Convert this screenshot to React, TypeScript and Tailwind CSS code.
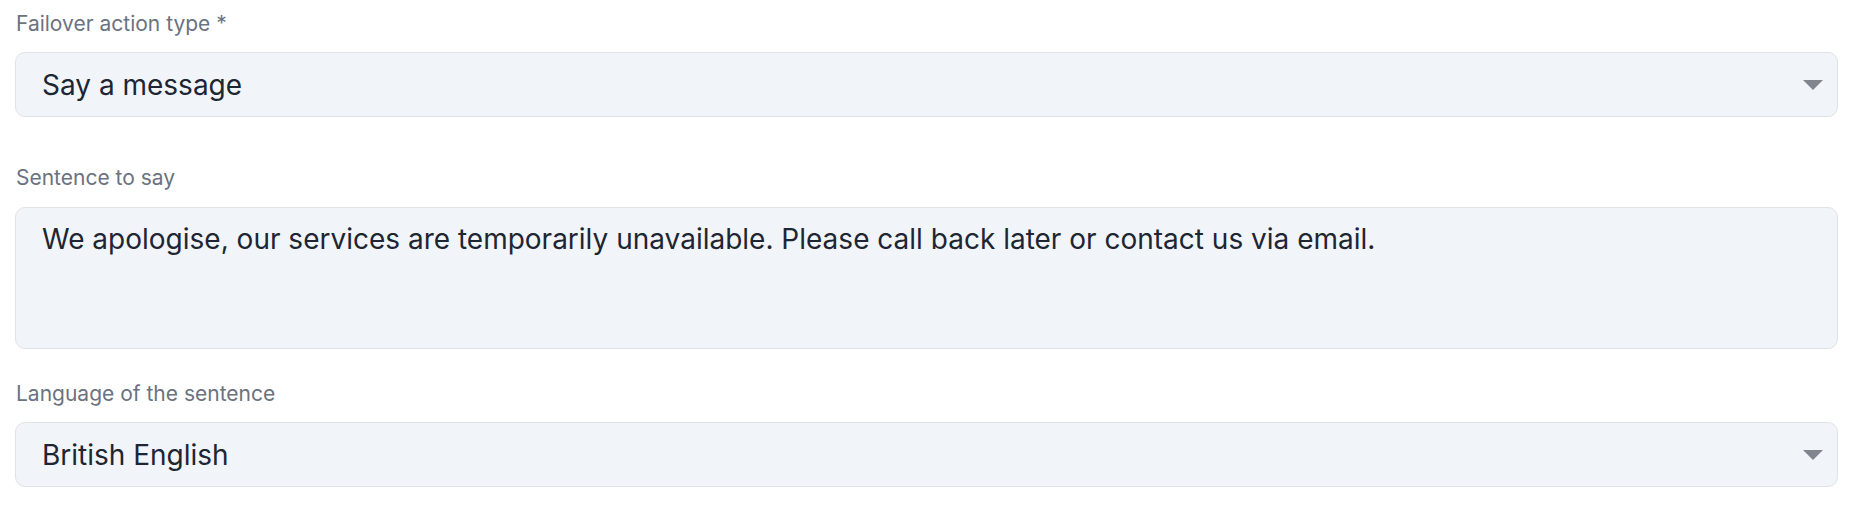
import React from 'react'

function Caret() {
  return (
    <svg width="20" height="10" viewBox="0 0 20 10" className="shrink-0">
      <path d="M0 0 L20 0 L10 10 Z" fill="#80858e" />
    </svg>
  )
}

function Label({ children }: { children: React.ReactNode }) {
  return (
    <div className="h-[32px] text-[21px] leading-[32px] text-[#6b7280] pl-px">{children}</div>
  )
}

function Select({ value }: { value: string }) {
  return (
    <div className="mt-[12px] h-[65px] flex items-center justify-between rounded-[10px] border border-[#dfe3e8] bg-[#f1f5f9] pl-[26px] pr-[14px]">
      <span className="text-[28px] leading-[40px] text-[#1e2533]">{value}</span>
      <Caret />
    </div>
  )
}

export default function App() {
  return (
    <div className="min-h-screen bg-white font-['Inter',sans-serif] pl-[15px] pr-[18px] pt-[8px]">
      {/* Failover action */}
      <Label>Failover action type *</Label>
      <Select value="Say a message" />

      {/* Sentence */}
      <div className="mt-[45px]">
        <Label>Sentence to say</Label>
        <div className="mt-[13px] h-[142px] rounded-[10px] border border-[#dfe3e8] bg-[#f1f5f9] pl-[26px] pr-[26px] pt-[11px]">
          <p className="text-[28px] leading-[40px] text-[#1e2533]">
            We apologise, our services are temporarily unavailable. Please call back later or contact us via email.
          </p>
        </div>
      </div>

      {/* Language */}
      <div className="mt-[29px]">
        <Label>Language of the sentence</Label>
        <Select value="British English" />
      </div>
    </div>
  )
}
